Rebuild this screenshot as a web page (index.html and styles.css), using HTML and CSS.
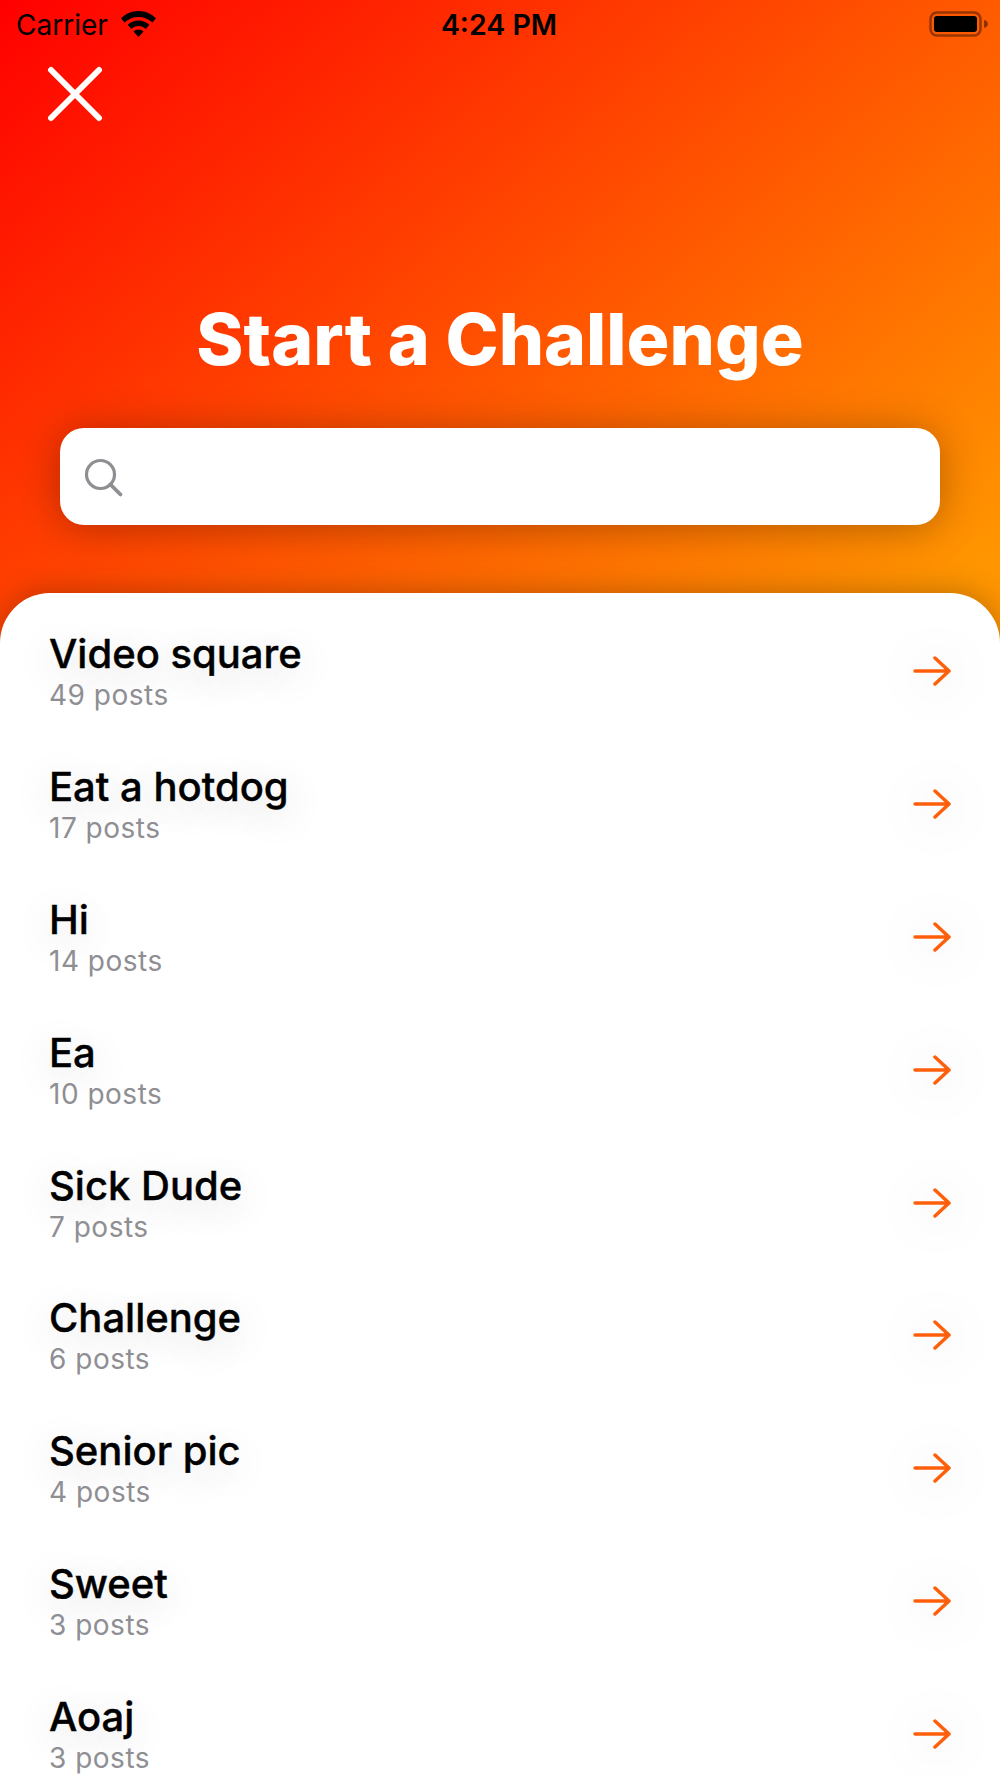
FILE: index.html
```html
<!DOCTYPE html>
<html lang="en">
<head>
<meta charset="utf-8">
<title>Start a Challenge</title>
<link rel="stylesheet" href="styles.css">
</head>
<body>
<div class="screen">
  <header class="status">
    <div class="status-left">
      <span class="carrier">Carrier</span>
      <svg class="wifi" width="37" height="26" viewBox="0 0 37 24" preserveAspectRatio="none"><path d="M18.500 0C11.500 0 5.600 2.500 1 6.800l3.600 3.900C8.300 7.300 13 5.500 18.500 5.500s10.200 1.800 13.900 5.200L36 6.800C31.400 2.500 25.500 0 18.500 0zM18.500 8.700c-4.200 0-8 1.500-10.800 4.100l3.600 3.800c1.900-1.700 4.400-2.700 7.200-2.700s5.300 1 7.200 2.700l3.600-3.800c-2.800-2.600-6.600-4.100-10.800-4.100zM18.500 17c-2 0-3.700.7-5 1.900l5 5.100 5-5.100c-1.300-1.200-3-1.900-5-1.900z"/></svg>
    </div>
    <span class="clock">4:24 PM</span>
    <svg class="battery" width="60" height="28" viewBox="0 0 60 28"><rect x="1.500" y="2.500" width="50" height="23" rx="6.500" fill="none" stroke="#000" stroke-opacity=".4" stroke-width="2.500"/><rect x="5" y="6" width="43" height="16" rx="3"/><path d="M55 10c2.500.6 4 2.200 4 4s-1.500 3.400-4 4z" fill-opacity=".45"/></svg>
  </header>
  <button class="close" aria-label="Close">
    <svg width="56" height="56" viewBox="0 0 56 56"><path d="M4 4l48 48M52 4L4 52" fill="none" stroke="#fff" stroke-width="6" stroke-linecap="round"/></svg>
  </button>
  <h1 class="title">Start a Challenge</h1>
  <div class="search">
    <svg width="42" height="42" viewBox="0 0 42 42"><circle cx="16.500" cy="16.500" r="14" fill="none" stroke="#8e8e93" stroke-width="3.200"/><path d="M26.500 26.500l10 10" fill="none" stroke="#8e8e93" stroke-width="3.800" stroke-linecap="round"/></svg>
  </div>
  <main class="card">
    <a class="row"><div class="row-text"><div class="name">Video square</div><div class="count">49 posts</div></div><svg class="arrow" width="40" height="32" viewBox="0 0 40 32"><path d="M3 16h34M23 3l14 13-14 13" fill="none" stroke="#ff5f0a" stroke-width="3.500" stroke-linecap="round" stroke-linejoin="round"/></svg></a>
    <a class="row"><div class="row-text"><div class="name">Eat a hotdog</div><div class="count">17 posts</div></div><svg class="arrow" width="40" height="32" viewBox="0 0 40 32"><path d="M3 16h34M23 3l14 13-14 13" fill="none" stroke="#ff5f0a" stroke-width="3.500" stroke-linecap="round" stroke-linejoin="round"/></svg></a>
    <a class="row"><div class="row-text"><div class="name">Hi</div><div class="count">14 posts</div></div><svg class="arrow" width="40" height="32" viewBox="0 0 40 32"><path d="M3 16h34M23 3l14 13-14 13" fill="none" stroke="#ff5f0a" stroke-width="3.500" stroke-linecap="round" stroke-linejoin="round"/></svg></a>
    <a class="row"><div class="row-text"><div class="name">Ea</div><div class="count">10 posts</div></div><svg class="arrow" width="40" height="32" viewBox="0 0 40 32"><path d="M3 16h34M23 3l14 13-14 13" fill="none" stroke="#ff5f0a" stroke-width="3.500" stroke-linecap="round" stroke-linejoin="round"/></svg></a>
    <a class="row"><div class="row-text"><div class="name">Sick Dude</div><div class="count">7 posts</div></div><svg class="arrow" width="40" height="32" viewBox="0 0 40 32"><path d="M3 16h34M23 3l14 13-14 13" fill="none" stroke="#ff5f0a" stroke-width="3.500" stroke-linecap="round" stroke-linejoin="round"/></svg></a>
    <a class="row"><div class="row-text"><div class="name">Challenge</div><div class="count">6 posts</div></div><svg class="arrow" width="40" height="32" viewBox="0 0 40 32"><path d="M3 16h34M23 3l14 13-14 13" fill="none" stroke="#ff5f0a" stroke-width="3.500" stroke-linecap="round" stroke-linejoin="round"/></svg></a>
    <a class="row"><div class="row-text"><div class="name">Senior pic</div><div class="count">4 posts</div></div><svg class="arrow" width="40" height="32" viewBox="0 0 40 32"><path d="M3 16h34M23 3l14 13-14 13" fill="none" stroke="#ff5f0a" stroke-width="3.500" stroke-linecap="round" stroke-linejoin="round"/></svg></a>
    <a class="row"><div class="row-text"><div class="name">Sweet</div><div class="count">3 posts</div></div><svg class="arrow" width="40" height="32" viewBox="0 0 40 32"><path d="M3 16h34M23 3l14 13-14 13" fill="none" stroke="#ff5f0a" stroke-width="3.500" stroke-linecap="round" stroke-linejoin="round"/></svg></a>
    <a class="row"><div class="row-text"><div class="name">Aoaj</div><div class="count">3 posts</div></div><svg class="arrow" width="40" height="32" viewBox="0 0 40 32"><path d="M3 16h34M23 3l14 13-14 13" fill="none" stroke="#ff5f0a" stroke-width="3.500" stroke-linecap="round" stroke-linejoin="round"/></svg></a>
  </main>
</div>
</body>
</html>
```
FILE: styles.css
```css
* { box-sizing: border-box; }
html, body { margin: 0; padding: 0; height: 1778px; overflow: hidden; }
body { font-family: Inter, "Liberation Sans", sans-serif; background: #fff; }
.screen {
  width: 1000px;
  height: 1778px;
  overflow: hidden;
  background: linear-gradient(140deg, #ff0000 0, #ff9500 1060px) no-repeat;
  display: flex;
  flex-direction: column;
}
.status {
  height: 50px;
  display: grid;
  grid-template-columns: 1fr auto 1fr;
  align-items: center;
  padding: 0 11px 0 16px;
  color: #000;
  flex: none;
}
.status-left { display: flex; align-items: center; gap: 12px; }
.carrier { font-size: 28px; line-height: 50px; }
.wifi { margin-top: -3px; }
.clock { font-size: 28.500px; font-weight: 600; line-height: 50px; margin-right: 7px; }
.battery { justify-self: end; margin-bottom: 2px; }
.close {
  flex: none;
  width: 56px;
  height: 56px;
  margin: 16px 0 0 47px;
  padding: 0;
  border: 0;
  background: none;
  display: block;
}
.close svg { display: block; }
.title {
  flex: none;
  margin: 174px 0 0;
  height: 86px;
  font-size: 71.500px;
  line-height: 86px;
  font-weight: 800;
  color: #fff;
  text-align: center;
}
.search {
  flex: none;
  margin: 46px 60px 0;
  height: 97px;
  border-radius: 24px;
  background: #fff;
  box-shadow: 0 3px 40px rgba(0,0,0,.3);
  display: flex;
  align-items: center;
  padding-left: 24px;
}
.search svg { margin-top: 4px; }
.card {
  flex: none;
  margin-top: 68px;
  background: #fff;
  border-radius: 50px 50px 0 0;
  box-shadow: 0 -2px 30px rgba(0,0,0,.25);
  padding: 12px 48px 0 49px;
}
.row {
  height: 132.800px;
  display: flex;
  justify-content: space-between;
  align-items: center;
  color: #000;
}
.name {
  font-size: 40px;
  line-height: 48px;
  font-weight: 500;
  -webkit-text-stroke: .4px #000;
  text-shadow: 0 8px 40px rgba(0,0,0,.2);
}
.count {
  font-size: 28px;
  line-height: 34px;
  letter-spacing: .5px;
  color: #8e8e93;
}
.arrow { filter: drop-shadow(0 3px 24px rgba(0,0,0,.18)); }
```
